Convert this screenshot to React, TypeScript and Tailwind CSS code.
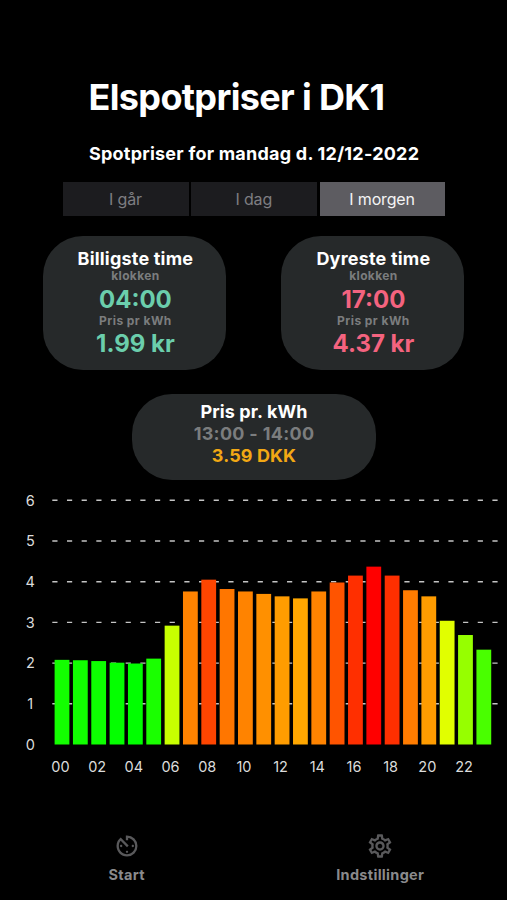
import { MdAvTimer, MdOutlineSettings } from "react-icons/md";

const PRICES = [
  2.08, 2.07, 2.05, 2.01, 1.99, 2.11, 2.92, 3.76, 4.05, 3.82, 3.76, 3.7,
  3.64, 3.59, 3.76, 3.98, 4.15, 4.37, 4.15, 3.79, 3.64, 3.04, 2.69, 2.33,
];

const MIN = Math.min(...PRICES);
const MAX = Math.max(...PRICES);

const ZERO_Y = 254.5;
const UNIT = 40.7;

// green at the lowest price, yellow halfway, red at the highest
function priceColor(price: number) {
  const t = (price - MIN) / (MAX - MIN);
  const r = Math.round(Math.min(1, t * 2) * 255);
  const g = Math.round(Math.min(1, (1 - t) * 2) * 255);
  return `rgb(${r},${g},0)`;
}

const DAYS = [
  { id: "yesterday", label: "I går", active: false },
  { id: "today", label: "I dag", active: false },
  { id: "tomorrow", label: "I morgen", active: true },
];

function HourCard({
  title,
  hour,
  price,
  color,
}: {
  title: string;
  hour: string;
  price: string;
  color: string;
}) {
  return (
    <div className="flex h-[134px] w-[183px] flex-col items-center rounded-[40px] bg-[#26292a] pt-3 pl-px font-bold whitespace-nowrap">
      <span className="text-[18px] leading-[22px] tracking-[0.2px] text-white">{title}</span>
      <span className="text-[12px] leading-[12px] tracking-[0.35px] text-[#7b7d7e]">klokken</span>
      <span className={`text-[24px] leading-[36px] ${color}`}>{hour}</span>
      <span className="text-[12px] leading-[5px] tracking-[0.45px] text-[#7b7d7e]">Pris pr kWh</span>
      <span className={`text-[24px] leading-[42px] ${color}`}>{price}</span>
    </div>
  );
}

function PriceChart() {
  return (
    <svg width="507" height="300" viewBox="0 0 507 300" className="block">
      {[1, 2, 3, 4, 5, 6].map((n) => (
        <line
          key={n}
          x1="52.3"
          x2="498"
          y1={ZERO_Y - n * UNIT}
          y2={ZERO_Y - n * UNIT}
          stroke="#c4c4c4"
          strokeWidth="1.4"
          strokeDasharray="5.2 9.47"
        />
      ))}
      {PRICES.map((p, i) => (
        <rect
          key={i}
          x={54.6 + i * 18.34}
          y={ZERO_Y - p * UNIT}
          width="14.8"
          height={p * UNIT}
          fill={priceColor(p)}
        />
      ))}
      {[0, 1, 2, 3, 4, 5, 6].map((n) => (
        <text key={n} x="30.3" y={ZERO_Y - n * UNIT + 5.3} textAnchor="middle" fontSize="14.5" fill="#dcdcdc">
          {n}
        </text>
      ))}
      {PRICES.map((_, i) =>
        i % 2 === 0 ? (
          <text
            key={i}
            x={60.5 + i * 18.34}
            y="282"
            textAnchor="middle"
            fontSize="14.5"
            fill="#dcdcdc"
          >
            {String(i).padStart(2, "0")}
          </text>
        ) : null
      )}
    </svg>
  );
}

export default function App() {
  return (
    <div className="flex h-[900px] w-[507px] flex-col overflow-hidden bg-black font-[Inter,sans-serif] text-white">
      <h1 className="mt-[75px] ml-[88.5px] text-[36px] leading-[44px] font-bold tracking-[-0.65px] whitespace-nowrap">
        Elspotpriser i DK1
      </h1>
      <p className="mt-[23px] ml-[89px] text-[18px] leading-[24px] font-bold tracking-[0.23px] whitespace-nowrap">
        Spotpriser for mandag d. 12/12-2022
      </p>

      <div className="mt-4 ml-[63px] flex w-[382.5px] gap-[2.5px]">
        {DAYS.map((d) => (
          <button
            key={d.id}
            className={`h-[34px] flex-1 pr-px text-[16px] tracking-[-0.15px] ${
              d.active ? "bg-[#5d5c61] text-[#f4f4f5]" : "bg-[#1c1c1f] text-[#7e7e82]"
            }`}
          >
            {d.label}
          </button>
        ))}
      </div>

      <div className="mt-[19.7px] ml-[43.4px] flex gap-[55px]">
        <HourCard title="Billigste time" hour="04:00" price="1.99 kr" color="text-[#6bceac]" />
        <HourCard title="Dyreste time" hour="17:00" price="4.37 kr" color="text-[#f4637f]" />
      </div>

      <div className="mt-[24.6px] ml-[132px] flex h-[85.5px] w-[244px] flex-col items-center rounded-[40px] bg-[#26292a] pt-[7px] text-[18px] leading-[22px] font-bold whitespace-nowrap">
        <span className="tracking-[0.1px]">Pris pr. kWh</span>
        <span className="tracking-[0.3px] text-[#7b7d7e]">13:00 - 14:00</span>
        <span className="tracking-[0.1px] text-[#f2a814]">3.59 DKK</span>
      </div>

      <div className="mt-[10.2px]">
        <PriceChart />
      </div>

      <nav className="mt-[42px] grid grid-cols-2 text-[14.5px] leading-[18px] font-bold text-[#8a8a8c]">
        <div className="flex flex-col items-center gap-[6px]">
          <MdAvTimer size={28} color="#59595b" />
          <span className="tracking-[0.35px]">Start</span>
        </div>
        <div className="flex flex-col items-center gap-[6px]">
          <MdOutlineSettings size={28} color="#59595b" />
          <span className="tracking-[0.3px]">Indstillinger</span>
        </div>
      </nav>
    </div>
  );
}
